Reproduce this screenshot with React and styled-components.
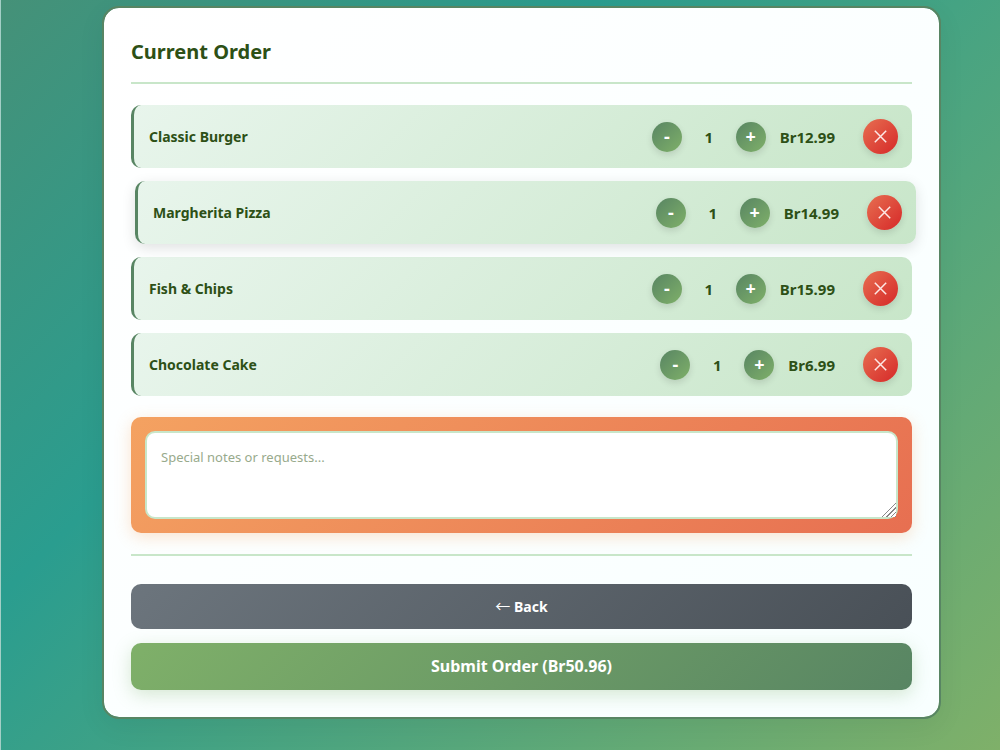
import { useState } from "react";
import styled, { createGlobalStyle } from "styled-components";

const GlobalStyle = createGlobalStyle`
    *{
        box-sizing:border-box;
    }
    body{
        margin:0;
        font-family:"Segoe UI","Noto Sans","Open Sans",sans-serif;
        color:#2d5016;
    }
    button,textarea{
        font-family:inherit;
    }
`;
const Page = styled.div`
    min-height:100vh;
    padding:6px 59px 32px 101px;
    border-left:1px solid #a3cfc6;
    background:linear-gradient(135deg,#459178 0%,#2a9d8f 34%,#7fb069 100%);
`;
const Card = styled.main`
    padding:27px;
    border:2px solid #588563;
    border-radius:17px;
    background:linear-gradient(135deg,#ffffff,#f8ffff);
    background-clip:padding-box;
    box-shadow:0 8px 28px rgba(0,0,0,0.06);
`;
const Title = styled.h1`
    margin:0 0 21px;
    padding-bottom:13px;
    border-bottom:2px solid #c8e6c9;
    font-size:20px;
    line-height:34px;
    font-weight:700;
`;
const List = styled.ul`
    display:flex;
    flex-direction:column;
    gap:13px;
    margin:0 0 21px;
    padding:0;
    list-style:none;
`;
const Row = styled.li`
    display:flex;
    align-items:center;
    gap:14px;
    padding:14px 14px 14px 15px;
    border-left:3px solid #588563;
    border-radius:10px;
    background:linear-gradient(135deg,#e8f5ec,#c8e6c9);
    font-size:14px;
    line-height:20px;
    font-weight:700;
    transform:${(props) => (props.$active ? "translateX(4px)" : "none")};
    box-shadow:${(props) => (props.$active ? "0 4px 14px rgba(0,0,0,0.12)" : "none")};
`;
const Name = styled.span`
    flex:1;
`;
const Quantity = styled.span`
    min-width:26px;
    text-align:center;
    font-size:15px;
`;
const Price = styled.span`
    font-size:15px;
`;
const RoundButton = styled.button`
    display:flex;
    align-items:center;
    justify-content:center;
    width:30px;
    height:30px;
    padding:0;
    border:none;
    border-radius:50%;
    background:linear-gradient(135deg,#588563,#7fb069);
    box-shadow:0 3px 7px rgba(0,0,0,0.12);
    color:#fff;
    font-size:18px;
    line-height:20px;
    font-weight:700;
    cursor:pointer;
`;
const StepButton = styled(RoundButton)`
    padding-bottom:2px;
`;
const RemoveButton = styled(RoundButton)`
    width:35px;
    height:35px;
    margin-left:14px;
    background:linear-gradient(135deg,#e76f51,#d62828);
`;
const Notes = styled.div`
    display:flex;
    margin-bottom:21px;
    padding:14px;
    border-radius:10px;
    background:linear-gradient(135deg,#f4a261,#e76f51);
    box-shadow:0 4px 16px rgba(244,162,97,0.3);
`;
const NotesInput = styled.textarea`
    width:100%;
    height:88px;
    padding:14px;
    border:2px solid #c8e6c9;
    border-radius:10px;
    background:#fff;
    color:#2d5016;
    font-size:13px;
    line-height:20px;
    resize:vertical;
    &::placeholder{
        color:#98aa8c;
    }
    &::-webkit-resizer{
        background:
            linear-gradient(135deg,#fff 50%,transparent 50%),
            repeating-linear-gradient(135deg,#fff 0 2px,#888 2px 3px);
    }
`;
const Actions = styled.div`
    display:flex;
    flex-direction:column;
    gap:14px;
    padding-top:28px;
    border-top:2px solid #c8e6c9;
`;
const Button = styled.button`
    padding:12px;
    border:none;
    border-radius:10px;
    background:linear-gradient(135deg,#6c757d,#495057);
    color:#fff;
    font-size:14px;
    line-height:20px;
    font-weight:700;
    cursor:pointer;
`;
const SubmitButton = styled(Button)`
    padding:13px;
    background:linear-gradient(135deg,#7fb069,#588563);
    box-shadow:0 5px 18px rgba(127,176,105,0.3);
    font-size:16px;
    line-height:21px;
`;
const Arrow = styled.span`
    font-family:"Noto Sans CJK JP",sans-serif;
    font-size:15px;
    font-weight:400;
`;

const menu = [
    { id: 1, name: "Classic Burger", price: 12.99, quantity: 1 },
    { id: 2, name: "Margherita Pizza", price: 14.99, quantity: 1 },
    { id: 3, name: "Fish & Chips", price: 15.99, quantity: 1 },
    { id: 4, name: "Chocolate Cake", price: 6.99, quantity: 1 },
];

const Cross = () => (
    <svg width="13" height="13" viewBox="0 0 13 13" fill="none" stroke="#fde8e6" strokeWidth="1.5" aria-hidden="true">
        <path d="M0.8 0.8 12.2 12.2M12.2 0.8 0.8 12.2" />
    </svg>
);

const App = () => {
    const [items, setItems] = useState(menu);
    const [active, setActive] = useState(2);
    const [notes, setNotes] = useState("");

    const change = (id, step) => {
        setItems(items.map((item) => (item.id === id ? { ...item, quantity: Math.max(1, item.quantity + step) } : item)));
    };
    const remove = (id) => {
        setItems(items.filter((item) => item.id !== id));
    };
    const total = items.reduce((sum, item) => sum + item.price * item.quantity, 0);

    return (
        <Page>
            <GlobalStyle />
            <Card>
                <Title>Current Order</Title>
                <List>
                    {items.map((item) => (
                        <Row key={item.id} $active={item.id === active} onMouseEnter={() => setActive(item.id)}>
                            <Name>{item.name}</Name>
                            <StepButton aria-label={`Less ${item.name}`} onClick={() => change(item.id, -1)}>-</StepButton>
                            <Quantity>{item.quantity}</Quantity>
                            <StepButton aria-label={`More ${item.name}`} onClick={() => change(item.id, 1)}>+</StepButton>
                            <Price>Br{(item.price * item.quantity).toFixed(2)}</Price>
                            <RemoveButton aria-label={`Remove ${item.name}`} onClick={() => remove(item.id)}>
                                <Cross />
                            </RemoveButton>
                        </Row>
                    ))}
                </List>
                <Notes>
                    <NotesInput
                        aria-label="Special notes or requests"
                        placeholder="Special notes or requests..."
                        value={notes}
                        onChange={(e) => setNotes(e.target.value)}
                    />
                </Notes>
                <Actions>
                    <Button><Arrow>←</Arrow> Back</Button>
                    <SubmitButton>Submit Order (Br{total.toFixed(2)})</SubmitButton>
                </Actions>
            </Card>
        </Page>
    );
};
export default App;
